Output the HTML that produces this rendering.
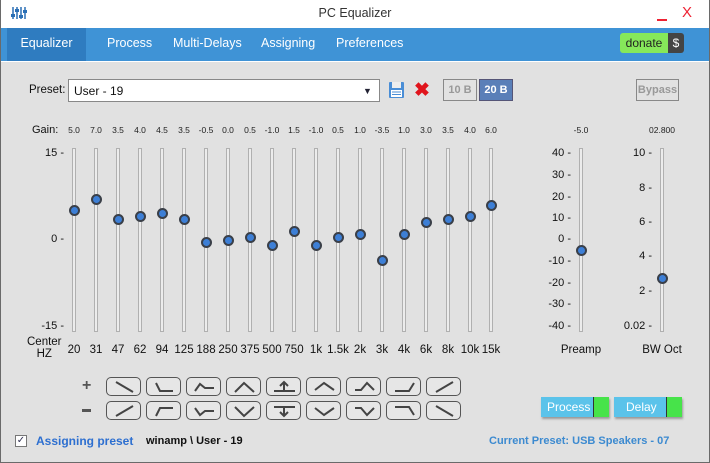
<!DOCTYPE html>
<html><head><meta charset="utf-8"><style>
*{margin:0;padding:0;box-sizing:border-box}
body{width:710px;height:463px;overflow:hidden;background:#e1e1e1;font-family:"Liberation Sans",sans-serif;position:relative;font-size:12px;color:#111}
.a{position:absolute;white-space:nowrap}
.frame{position:absolute;left:0;top:0;width:710px;height:463px;border:1px solid #6a6a6a;border-top:none;pointer-events:none}
.title{position:absolute;left:0;top:0;width:710px;height:28px;background:#fff}
.nav{position:absolute;left:0;top:28px;width:710px;height:34px;background:#3f93d6;border-bottom:1px solid #fff}
.tab{position:absolute;top:0;height:33px;line-height:31px;color:#fff;font-size:12.5px}
.g{font-size:8.5px;color:#222;transform:translateX(-50%)}
.f{font-size:11.5px;color:#111;transform:translateX(-50%)}
.s{font-size:11px;color:#111;text-align:right}
.tr{position:absolute;width:4px;border:1px solid #b0b0b0;background:#ececec;top:148px;height:184px}
.k{position:absolute;width:11px;height:11px;border-radius:50%;background:#3d7fd6;border:2px solid #3a3f48}
.btn{position:absolute;width:35px;height:19px;border:1px solid #555;border-radius:5px;background:#e6e6e6}
.btn svg{position:absolute;left:0;top:0}
</style></head><body>
<div class="title"></div>
<svg class="a" style="left:11px;top:6px" width="16" height="14"><g stroke="#2a6fb5" stroke-width="1.5"><line x1="2" y1="1" x2="2" y2="13"/><line x1="6" y1="1" x2="6" y2="13"/><line x1="10" y1="1" x2="10" y2="13"/><line x1="14" y1="1" x2="14" y2="13"/></g><g fill="#2a6fb5"><rect x="0" y="8" width="4" height="3"/><rect x="4" y="3" width="4" height="3"/><rect x="8" y="9" width="4" height="3"/><rect x="12" y="4" width="4" height="3"/></g></svg>
<div class="a" style="left:0;width:710px;text-align:center;top:6px;font-size:12.5px;color:#333">PC Equalizer</div>
<div class="a" style="left:657px;top:19px;width:10px;height:2px;background:#e23"></div>
<div class="a" style="left:682px;top:4px;font-size:15px;color:#e23">X</div>
<div class="nav">
<div class="tab" style="left:7px;width:79px;background:#2f7cc0;text-align:center">Equalizer</div>
<div class="tab" style="left:107px">Process</div>
<div class="tab" style="left:173px">Multi-Delays</div>
<div class="tab" style="left:261px">Assigning</div>
<div class="tab" style="left:336px">Preferences</div>
<div class="a" style="left:620px;top:5px;width:48px;height:20px;background:#86e85a;border-radius:3px 0 0 3px;line-height:20px;text-align:center;font-size:12px;color:#222">donate</div>
<div class="a" style="left:668px;top:5px;width:16px;height:20px;background:#444;line-height:20px;text-align:center;font-size:12px;color:#fff;border-radius:0 3px 3px 0">$</div>
</div>
<div class="a" style="left:29px;top:84px;font-size:11.5px">Preset:</div>
<div class="a" style="left:68px;top:79px;width:312px;height:23px;background:#fff;border:1px solid #888;padding:4px 5px;font-size:12px">User - 19</div>
<div class="a" style="left:363px;top:86px;font-size:9px;color:#223">▼</div>
<svg class="a" style="left:388px;top:81px" width="17" height="18"><rect x="1" y="1" width="15" height="16" fill="#4a8ed6" rx="1"/><rect x="4" y="1" width="9" height="6" fill="#eee"/><rect x="3" y="9" width="11" height="7" fill="#fff"/><g stroke="#4a8ed6"><line x1="4" y1="11" x2="13" y2="11"/><line x1="4" y1="13.5" x2="13" y2="13.5"/></g></svg>
<div class="a" style="left:414px;top:79px;font-size:19px;font-weight:bold;color:#e0141c">✖</div>
<div class="a" style="left:443px;top:79px;width:34px;height:22px;border:1px solid #888;background:#e2e2e2;color:#999;font-weight:bold;font-size:11px;line-height:20px;text-align:center">10 B</div>
<div class="a" style="left:479px;top:79px;width:34px;height:22px;border:1px solid #557;background:#5a7fb8;color:#fff;font-weight:bold;font-size:11px;line-height:20px;text-align:center">20 B</div>
<div class="a" style="left:636px;top:79px;width:43px;height:22px;border:1px solid #888;background:#e2e2e2;color:#999;font-weight:bold;font-size:11px;line-height:20px;text-align:center">Bypass</div>

<div class="a" style="left:32px;top:124px;font-size:11px">Gain:</div>
<div class="a g" style="left:74px;top:125px">5.0</div><div class="a g" style="left:96px;top:125px">7.0</div><div class="a g" style="left:118px;top:125px">3.5</div><div class="a g" style="left:140px;top:125px">4.0</div><div class="a g" style="left:162px;top:125px">4.5</div><div class="a g" style="left:184px;top:125px">3.5</div><div class="a g" style="left:206px;top:125px">-0.5</div><div class="a g" style="left:228px;top:125px">0.0</div><div class="a g" style="left:250px;top:125px">0.5</div><div class="a g" style="left:272px;top:125px">-1.0</div><div class="a g" style="left:294px;top:125px">1.5</div><div class="a g" style="left:316px;top:125px">-1.0</div><div class="a g" style="left:338px;top:125px">0.5</div><div class="a g" style="left:360px;top:125px">1.0</div><div class="a g" style="left:382px;top:125px">-3.5</div><div class="a g" style="left:404px;top:125px">1.0</div><div class="a g" style="left:426px;top:125px">3.0</div><div class="a g" style="left:448px;top:125px">3.5</div><div class="a g" style="left:470px;top:125px">4.0</div><div class="a g" style="left:491px;top:125px">6.0</div>
<div class="a g" style="left:581px;top:125px">-5.0</div><div class="a g" style="left:662px;top:125px">02.800</div>

<div class="a s" style="left:20px;width:44px;top:147px">15 -</div>
<div class="a s" style="left:20px;width:44px;top:233px">0 -</div>
<div class="a s" style="left:20px;width:44px;top:320px">-15 -</div>
<div class="a" style="left:27px;top:336px;font-size:11.5px;text-align:center;line-height:12px">Center<br>HZ</div>
<div class="a f" style="left:74px;top:344px">20</div><div class="a f" style="left:96px;top:344px">31</div><div class="a f" style="left:118px;top:344px">47</div><div class="a f" style="left:140px;top:344px">62</div><div class="a f" style="left:162px;top:344px">94</div><div class="a f" style="left:184px;top:344px">125</div><div class="a f" style="left:206px;top:344px">188</div><div class="a f" style="left:228px;top:344px">250</div><div class="a f" style="left:250px;top:344px">375</div><div class="a f" style="left:272px;top:344px">500</div><div class="a f" style="left:294px;top:344px">750</div><div class="a f" style="left:316px;top:344px">1k</div><div class="a f" style="left:338px;top:344px">1.5k</div><div class="a f" style="left:360px;top:344px">2k</div><div class="a f" style="left:382px;top:344px">3k</div><div class="a f" style="left:404px;top:344px">4k</div><div class="a f" style="left:426px;top:344px">6k</div><div class="a f" style="left:448px;top:344px">8k</div><div class="a f" style="left:470px;top:344px">10k</div><div class="a f" style="left:491px;top:344px">15k</div>

<div class="a s" style="left:530px;width:41px;top:147px">40 -</div><div class="a s" style="left:530px;width:41px;top:169px">30 -</div><div class="a s" style="left:530px;width:41px;top:191px">20 -</div><div class="a s" style="left:530px;width:41px;top:212px">10 -</div><div class="a s" style="left:530px;width:41px;top:233px">0 -</div><div class="a s" style="left:530px;width:41px;top:255px">-10 -</div><div class="a s" style="left:530px;width:41px;top:277px">-20 -</div><div class="a s" style="left:530px;width:41px;top:298px">-30 -</div><div class="a s" style="left:530px;width:41px;top:320px">-40 -</div>
<div class="a s" style="left:600px;width:52px;top:147px">10 -</div><div class="a s" style="left:600px;width:52px;top:182px">8 -</div><div class="a s" style="left:600px;width:52px;top:216px">6 -</div><div class="a s" style="left:600px;width:52px;top:250px">4 -</div><div class="a s" style="left:600px;width:52px;top:285px">2 -</div><div class="a s" style="left:600px;width:52px;top:320px">0.02 -</div>
<div class="a f" style="left:581px;top:344px">Preamp</div><div class="a f" style="left:662px;top:344px">BW Oct</div>

<div id="sl"></div>

<div class="a" style="left:82px;top:377px;font-size:16px;font-weight:bold;color:#555">+</div>
<div class="a" style="left:82px;top:409px;width:9px;height:3px;background:#555"></div>
<div id="bt"></div>

<div class="a" style="left:541px;top:397px;width:68px;height:20px;background:#5bc3ea;box-shadow:1px 2px 2px #999;color:#fff;font-size:12px;line-height:20px;padding-left:6px">Process<span style="position:absolute;right:0;top:0;width:16px;height:20px;background:#47e34a;border-left:1px solid #333"></span></div>
<div class="a" style="left:614px;top:397px;width:68px;height:20px;background:#5bc3ea;box-shadow:1px 2px 2px #999;color:#fff;font-size:12px;line-height:20px;padding-left:12px">Delay<span style="position:absolute;right:0;top:0;width:16px;height:20px;background:#47e34a;border-left:1px solid #333"></span></div>

<div class="a" style="left:15px;top:435px;width:12px;height:12px;border:1px solid #777;background:#fff;font-size:10px;line-height:10px;text-align:center;color:#335">✓</div>
<div class="a" style="left:36px;top:434px;font-weight:bold;font-size:12px;color:#2d6fd0">Assigning preset</div>
<div class="a" style="left:146px;top:435px;font-weight:bold;font-size:11px;color:#111">winamp \ User - 19</div>
<div class="a" style="left:489px;top:435px;font-weight:bold;font-size:11px;color:#3c8ad0">Current Preset: USB Speakers - 07</div>
<div class="frame"></div>
<script>
var xs=[74,96,118,140,162,184,206,228,250,272,294,316,338,360,382,404,426,448,470,491];
var ys=[210,199,219,216,213,219,242,240,237,245,231,245,237,234,260,234,222,219,216,205];
var h='';
xs.forEach(function(x,i){h+='<div class="tr" style="left:'+(x-2)+'px"></div><div class="k" style="left:'+(x-5.5)+'px;top:'+(ys[i]-5.5)+'px"></div>';});
h+='<div class="tr" style="left:579px"></div><div class="k" style="left:575.5px;top:244.5px"></div>';
h+='<div class="tr" style="left:660px"></div><div class="k" style="left:656.5px;top:272.5px"></div>';
document.getElementById('sl').innerHTML=h;
var P=['M9 4 L26 14','M9 5 L13 13 L26 13','M8 13 L13 6 L18 10 L27 10','M8 14 L17 5 L27 14','M7 13 L28 13 M17 13 L17 4 M13 8 L17 4 L21 8','M8 12 L17 5 L27 12','M8 12 L14 12 L20 5 L27 12','M8 13 L22 13 L27 5','M9 14 L26 4'];
var M=['M9 14 L26 4','M9 14 L13 6 L26 6','M8 6 L13 13 L18 9 L27 9','M8 5 L17 14 L27 5','M7 5 L28 5 M17 5 L17 14 M13 10 L17 14 L21 10','M8 6 L17 13 L27 6','M8 6 L14 6 L20 13 L27 6','M8 5 L22 5 L27 13','M9 4 L26 14'];
var b='';
for(var i=0;i<9;i++){var x=106+i*40;
b+='<div class="btn" style="left:'+x+'px;top:377px"><svg width="35" height="19"><path d="'+P[i]+'" stroke="#444" stroke-width="2" fill="none"/></svg></div>';
b+='<div class="btn" style="left:'+x+'px;top:401px"><svg width="35" height="19"><path d="'+M[i]+'" stroke="#444" stroke-width="2" fill="none"/></svg></div>';}
document.getElementById('bt').innerHTML=b;
</script>
</body></html>
